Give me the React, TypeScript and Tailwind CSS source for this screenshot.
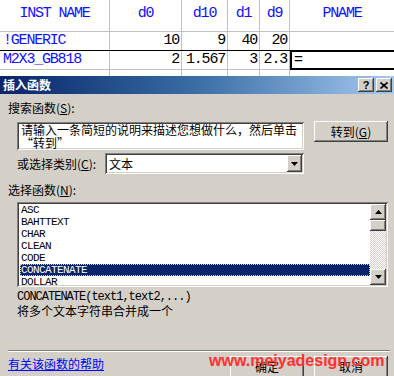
import React from "react";

const raised =
  "bg-[#d4d0c8] shadow-[inset_-1px_-1px_#404040,inset_1px_1px_#ffffff,inset_-2px_-2px_#808080,inset_2px_2px_#d4d0c8]";
const sunken =
  "bg-white shadow-[inset_1px_1px_#808080,inset_-1px_-1px_#ffffff,inset_2px_2px_#404040,inset_-2px_-2px_#d4d0c8]";
const cjk = "font-['Noto_Sans_CJK_SC',sans-serif]";
const mono = "font-['Liberation_Mono','Noto_Sans_CJK_SC',monospace]";

const cols = ["w-[110px]", "w-[72px]", "w-[46px]", "w-[32px]", "w-[30px]", "flex-1"];

const functions = ["ASC", "BAHTTEXT", "CHAR", "CLEAN", "CODE", "CONCATENATE", "DOLLAR"];

function Sheet() {
  const header = ["INST NAME", "d0", "d10", "d1", "d9", "PNAME"];
  const rows = [
    ["!GENERIC", "10", "9", "40", "20", ""],
    ["M2X3_GB818", "2", "1.567", "3", "2.3", "="],
  ];
  return (
    <div className={`h-[76px] overflow-hidden bg-white ${mono} text-[15px] tracking-[-1.2px]`}>
      {/* header row */}
      <div className="flex h-[32px] border-b border-[#c0c0c0]">
        {header.map((h, i) => (
          <div
            key={h}
            className={`${cols[i]} flex items-center justify-center pb-[2px] text-[#1010ff] border-r border-[#c0c0c0] last:border-r-0`}
          >
            {h}
          </div>
        ))}
      </div>
      {rows.map((r, ri) => (
        <div
          key={ri}
          className={`flex h-[19px] ${ri === 0 ? "border-b border-black" : "border-b border-[#c0c0c0]"}`}
        >
          {r.map((c, i) => {
            if (i === 5 && ri === 1) {
              return (
                <div
                  key={i}
                  className="flex-1 -my-[1px] border-2 border-r-0 border-black pl-[2px] leading-[17px] text-black"
                >
                  {c}
                </div>
              );
            }
            return (
              <div
                key={i}
                className={`${cols[i]} flex items-center border-r border-[#c0c0c0] last:border-r-0 ${
                  i === 0 ? "pl-[3px] text-[#1010ff]" : "justify-end pr-[2px] text-black"
                }`}
              >
                {c}
              </div>
            );
          })}
        </div>
      ))}
      <div className="flex h-[6px]">
        {cols.map((c, i) => (
          <div key={i} className={`${c} border-r border-[#c0c0c0] last:border-r-0`} />
        ))}
      </div>
    </div>
  );
}

function Arrow({ down }: { down?: boolean }) {
  return (
    <svg width="7" height="4" viewBox="0 0 7 4">
      {down ? <polygon points="0,0 7,0 3.5,4" fill="black" /> : <polygon points="0,4 7,4 3.5,0" fill="black" />}
    </svg>
  );
}

function Dialog() {
  return (
    <div className={`flex flex-col bg-[#d4d0c8] ${cjk} text-[12px] text-black`}>
      {/* Title bar */}
      <div className="flex h-[18px] items-center bg-gradient-to-r from-[#0a246a] via-[#3a6ea5] to-[#a6caf0] pl-[3px] pr-[2px]">
        <span className="flex-1 font-bold text-white leading-[18px]">插入函数</span>
        <div className={`${raised} flex h-[14px] w-[16px] items-center justify-center font-['Liberation_Sans',sans-serif] text-[11px] font-bold leading-none`}>
          ?
        </div>
        <div className={`${raised} ml-[2px] flex h-[14px] w-[16px] items-center justify-center`}>
          <svg width="8" height="7" viewBox="0 0 8 7">
            <path d="M0.5 0.5 L7.5 6.5 M7.5 0.5 L0.5 6.5" stroke="black" strokeWidth="1.6" />
          </svg>
        </div>
      </div>

      <div className="relative flex h-[282px] flex-col pl-[8px]">
        <div className="mt-[7px] leading-[14px]">
          搜索函数(<u>S</u>):
        </div>

        <div className="mt-[6px] ml-[9px] flex items-start">
          <div className={`${sunken} mt-[1px] h-[28px] w-[287px] px-[4px] pt-[1px] leading-[13px]`}>
            请输入一条简短的说明来描述您想做什么，然后单击
            <br />
            “转到”
          </div>
          <div className={`${raised} ml-[10px] flex h-[21px] w-[74px] items-center justify-center`}>
            转到(<u>G</u>)
          </div>
        </div>

        <div className="mt-[3px] ml-[9px] flex h-[21px] items-center">
          <div className="w-[88px]">
            或选择类别(<u>C</u>):
          </div>
          <div className={`${sunken} flex h-[21px] w-[199px] items-center pl-[4px] pr-[2px]`}>
            <span className="flex-1">文本</span>
            <div className={`${raised} flex h-[17px] w-[15px] items-center justify-center`}>
              <Arrow down />
            </div>
          </div>
        </div>

        <div className="mt-[9px] leading-[14px]">
          选择函数(<u>N</u>):
        </div>

        <div className={`${sunken} mt-[5px] ml-[9px] flex h-[85px] w-[371px] p-[2px]`}>
          <div className={`flex-1 pl-[1px] ${mono} text-[11px] tracking-[-0.6px]`}>
            {functions.map((f) => (
              <div
                key={f}
                className={`h-[12px] pl-[1px] leading-[12px] ${
                  f === "CONCATENATE"
                    ? "bg-[#0a246a] text-white outline-1 outline-dotted outline-offset-[-1px] outline-[#d4d0c8]"
                    : ""
                }`}
              >
                {f}
              </div>
            ))}
          </div>
          <div className="flex w-[16px] flex-col">
            <div className={`${raised} flex h-[16px] items-center justify-center`}>
              <Arrow />
            </div>
            <div className={`${raised} h-[11px]`} />
            <div className="flex-1 bg-[repeating-conic-gradient(#ffffff_0_25%,#d4d0c8_0_50%)] bg-[length:2px_2px]" />
            <div className={`${raised} flex h-[16px] items-center justify-center`}>
              <Arrow down />
            </div>
          </div>
        </div>

        <div className={`mt-[4px] ml-[9px] ${mono} text-[12px] leading-[13px] tracking-[-1px]`}>
          CONCATENATE(text1,text2,...)
        </div>
        <div className="ml-[9px] leading-[14px]">将多个文本字符串合并成一个</div>

        <div className="mt-[32px] mr-[4px] h-[2px] border-t border-b border-t-[#808080] border-b-white" />

        <div className="mt-[4px] flex items-start">
          <span className="mt-[1px] flex-1 text-[#0000ff] underline leading-[14px]">有关该函数的帮助</span>
          <div className={`${raised} flex h-[22px] w-[74px] items-center justify-center`}>确定</div>
          <div className={`${raised} ml-[10px] mr-[6px] flex h-[22px] w-[74px] items-center justify-center`}>
            取消
          </div>
        </div>

        <span className="absolute left-[209px] top-[258px] font-['Liberation_Sans',sans-serif] text-[16px] font-bold leading-[18px] text-[#ff3030]">
          www.meiyadesign.com
        </span>
      </div>
    </div>
  );
}

export default function App() {
  return (
    <div className="relative h-[376px] w-[394px] overflow-hidden bg-white">
      <Sheet />
      <Dialog />
    </div>
  );
}
